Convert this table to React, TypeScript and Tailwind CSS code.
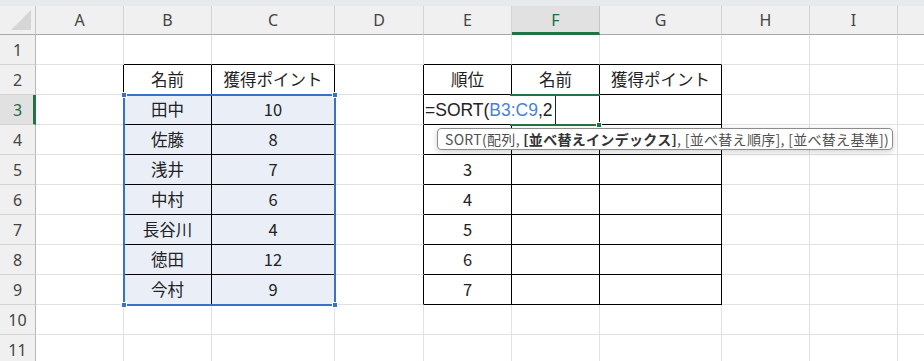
import React from 'react';

const COLS = ['A', 'B', 'C', 'D', 'E', 'F', 'G', 'H', 'I'];
const ROWS = [1, 2, 3, 4, 5, 6, 7, 8, 9, 10, 11];

const values: Record<string, string> = {
    B2: '名前', C2: '獲得ポイント',
    B3: '田中', C3: '10',
    B4: '佐藤', C4: '8',
    B5: '浅井', C5: '7',
    B6: '中村', C6: '6',
    B7: '長谷川', C7: '4',
    B8: '徳田', C8: '12',
    B9: '今村', C9: '9',
    E2: '順位', F2: '名前', G2: '獲得ポイント',
    E5: '3', E6: '4', E7: '5', E8: '6', E9: '7',
};

// bordered ranges B2:C9 and E2:G9 (A = 1)
const inTable = (c: number, r: number) =>
    (c >= 2 && c <= 3 && r >= 2 && r <= 9) || (c >= 5 && c <= 7 && r >= 2 && r <= 9);

const inSelection = (c: number, r: number) => c >= 2 && c <= 3 && r >= 3 && r <= 9;

const Cell: React.FC<{ c: number; r: number }> = ({ c, r }) => {
    const right = inTable(c, r) || inTable(c + 1, r) ? 'border-r-black' : 'border-r-[#e1e1e1]';
    const bottom = inTable(c, r) || inTable(c, r + 1) ? 'border-b-black' : 'border-b-[#e1e1e1]';
    const bg = inSelection(c, r) ? 'bg-[#e9eef7]' : 'bg-white';
    const text = values[`${COLS[c - 1]}${r}`];
    return (
        <div className={`flex h-[30px] items-center justify-center border-r border-b text-[16.5px] text-[#222] ${right} ${bottom} ${bg}`}>
            {text}
        </div>
    );
};

const Handle: React.FC<{ pos: string; color: string }> = ({ pos, color }) => (
    <div className={`absolute h-[6px] w-[6px] border border-white ${pos} ${color}`} />
);

const App: React.FC = () => {
    return (
        <div className="relative h-[361px] w-[924px] overflow-hidden bg-white font-['Noto_Sans_CJK_JP','Noto_Sans',sans-serif]">
            <div className="h-[6px] bg-[#e7eaed]" />
            <div className="grid grid-cols-[36px_88px_88px_123px_89px_88px_88px_122px_88px_88px_1fr]">
                {/* corner */}
                <div className="relative h-[29px] border-r border-b border-r-[#c6c6c6] border-b-[#a8a8a8] bg-[#f0f0f0]">
                    <svg className="absolute right-[4px] bottom-[4px]" width="20" height="20" viewBox="0 0 20 20">
                        <polygon points="20,0 20,20 0,20" fill="#d6d6d6" />
                    </svg>
                </div>
                {COLS.map(col => (
                    <div
                        key={col}
                        className={
                            col === 'F'
                                ? "flex h-[29px] items-center justify-center border-r border-b-[3px] border-r-[#c6c6c6] border-b-[#217346] bg-[#e1e1e1] pt-[2px] font-['Noto_Sans',sans-serif] text-[16px] text-[#1f6b42]"
                                : "flex h-[29px] items-center justify-center border-r border-b border-r-[#d4d4d4] border-b-[#a8a8a8] bg-[#f0f0f0] font-['Noto_Sans',sans-serif] text-[16px] text-[#444]"
                        }
                    >
                        {col}
                    </div>
                ))}
                {/* next column, scrolled past the window edge */}
                <div className="h-[29px] border-b border-b-[#a8a8a8] bg-[#f0f0f0]" />
                {ROWS.map(r => (
                    <React.Fragment key={r}>
                        <div
                            className={
                                r === 3
                                    ? "flex h-[30px] items-center justify-center border-r-[3px] border-b border-r-[#217346] border-b-[#d4d4d4] bg-[#e1e1e1] pl-[2px] font-['Noto_Sans',sans-serif] text-[16px] text-[#1f6b42]"
                                    : "flex h-[30px] items-center justify-center border-r border-b border-r-[#b8b8b8] border-b-[#d4d4d4] bg-[#f0f0f0] font-['Noto_Sans',sans-serif] text-[16px] text-[#444]"
                            }
                        >
                            {r}
                        </div>
                        {COLS.map((_, i) => (
                            <Cell key={i} c={i + 1} r={r} />
                        ))}
                        <div className="h-[30px] border-b border-b-[#e1e1e1]" />
                    </React.Fragment>
                ))}
            </div>

            {/* selected range B3:C9 */}
            <div className="pointer-events-none absolute top-[94px] left-[123px] h-[212px] w-[213px] border-2 border-[#3a70c8]">
                <Handle pos="-top-[4px] -left-[4px]" color="bg-[#3a70c8]" />
                <Handle pos="-top-[4px] -right-[4px]" color="bg-[#3a70c8]" />
                <Handle pos="-bottom-[4px] -left-[4px]" color="bg-[#3a70c8]" />
                <Handle pos="-bottom-[4px] -right-[4px]" color="bg-[#3a70c8]" />
            </div>

            {/* active cell F3 */}
            <div className="pointer-events-none absolute top-[94px] left-[510px] h-[32px] w-[90px] border-y-2 border-[#217346]">
                <Handle pos="-bottom-[4px] -right-[2px]" color="bg-[#217346]" />
            </div>

            {/* in-cell formula editor */}
            <div className="absolute top-[96px] left-[424px] flex h-[28px] w-[132px] items-center border-r border-r-[#222] bg-white pl-[1px] font-['Liberation_Sans',sans-serif] text-[17.5px] text-[#222]">
                <span>=SORT(</span>
                <span className="text-[#4a7fd6]">B3:C9</span>
                <span>,2</span>
            </div>

            {/* argument hint */}
            <div className="absolute top-[128px] left-[437px] h-[22px] w-[456px] rounded-[4px] border border-[#8c8c8c] bg-white pl-[7px] text-[14px] leading-[20px] tracking-[0.3px] whitespace-pre text-[#505050] shadow-[0_2px_6px_rgba(0,0,0,0.18)]">
                SORT(配列, <span className="font-bold text-[#333]">[並べ替えインデックス]</span>, [並べ替え順序], [並べ替え基準])
            </div>
        </div>
    );
};

export default App;
